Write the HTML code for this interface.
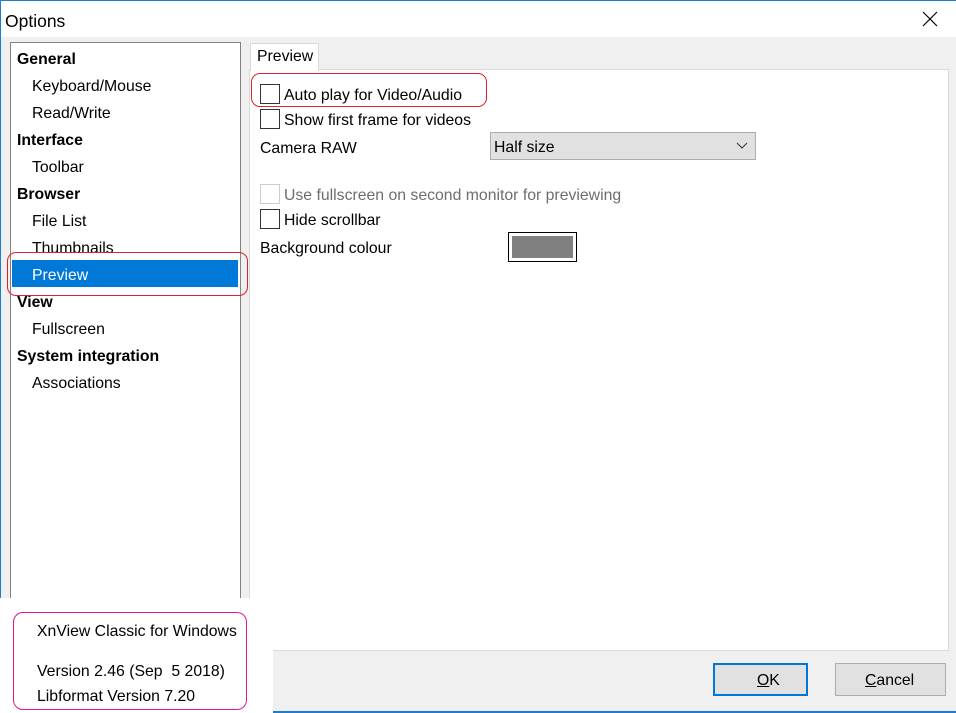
<!DOCTYPE html>
<html><head><style>
*{margin:0;padding:0;box-sizing:border-box}
body{width:956px;height:713px;position:relative;background:#f0f0f0;font-family:"Liberation Sans",Arial,sans-serif;font-size:15.8px;color:#000;overflow:hidden}
.a{position:absolute;white-space:nowrap}
.t{position:absolute;white-space:nowrap;margin-top:1px}
.cb{position:absolute;width:20px;height:20px;border:1px solid #333;background:#fff}
</style></head><body>
<div class="a" style="left:0;top:0;width:956px;height:1px;background:#1a7fd4"></div>
<div class="a" style="left:0;top:0;width:1px;height:713px;background:#1a7fd4"></div>
<div class="a" style="left:1px;top:1px;width:955px;height:36px;background:#fff"></div>
<div class="t" style="left:5px;top:10px;font-size:17.5px">Options</div>
<svg class="a" style="left:922px;top:11px" width="16" height="16"><path d="M1 1L15 15M15 1L1 15" stroke="#000" stroke-width="1.2"/></svg>

<div class="a" style="left:10px;top:42px;width:231px;height:566px;background:#fff;border:1px solid #828282"></div>
<div class="a" style="left:12px;top:260px;width:226px;height:27px;background:#0078d7"></div>
<div class="t" style="left:17px;top:50px;font-weight:bold">General</div>
<div class="t" style="left:32px;top:77px">Keyboard/Mouse</div>
<div class="t" style="left:32px;top:104px">Read/Write</div>
<div class="t" style="left:17px;top:131px;font-weight:bold">Interface</div>
<div class="t" style="left:32px;top:158px">Toolbar</div>
<div class="t" style="left:17px;top:185px;font-weight:bold">Browser</div>
<div class="t" style="left:32px;top:212px">File List</div>
<div class="t" style="left:32px;top:239px">Thumbnails</div>
<div class="t" style="left:32px;top:266px;color:#fff">Preview</div>
<div class="t" style="left:17px;top:293px;font-weight:bold">View</div>
<div class="t" style="left:32px;top:320px">Fullscreen</div>
<div class="t" style="left:17px;top:347px;font-weight:bold">System integration</div>
<div class="t" style="left:32px;top:374px">Associations</div>
<div class="a" style="left:7px;top:252px;width:241px;height:44px;border:1px solid #e0202a;border-radius:9px"></div>

<div class="a" style="left:249px;top:69px;width:700px;height:582px;background:#fff;border:1px solid #d9d9d9"></div>
<div class="a" style="left:250px;top:43px;width:69px;height:28px;background:#fff;border:1px solid #d9d9d9;border-bottom:none"></div>
<div class="t" style="left:257px;top:47px">Preview</div>

<div class="a" style="left:251px;top:73px;width:236px;height:34px;border:1px solid #e0202a;border-radius:9px"></div>
<div class="cb" style="left:260px;top:84px"></div><div class="t" style="left:284px;top:86px">Auto play for Video/Audio</div>
<div class="cb" style="left:260px;top:109px"></div><div class="t" style="left:284px;top:111px">Show first frame for videos</div>
<div class="t" style="left:260px;top:139px">Camera RAW</div>
<div class="a" style="left:490px;top:132px;width:266px;height:28px;background:#e1e1e1;border:1px solid #adadad"></div>
<div class="t" style="left:494px;top:138px">Half size</div>
<svg class="a" style="left:736px;top:142px" width="12" height="8"><path d="M1 1L6 6L11 1" stroke="#333" fill="none"/></svg>
<div class="cb" style="left:260px;top:184px;border-color:#ccc"></div><div class="t" style="left:284px;top:186px;color:#6d6d6d">Use fullscreen on second monitor for previewing</div>
<div class="cb" style="left:260px;top:209px"></div><div class="t" style="left:284px;top:211px">Hide scrollbar</div>
<div class="t" style="left:260px;top:239px">Background colour</div>
<div class="a" style="left:508px;top:232px;width:69px;height:30px;border:1px solid #000;background:#fff"></div>
<div class="a" style="left:512px;top:236px;width:61px;height:22px;background:#808080"></div>

<div class="a" style="left:713px;top:663px;width:95px;height:33px;background:#e1e1e1;border:2px solid #0078d7"></div>
<div class="t" style="left:757px;top:671px"><u>O</u>K</div>
<div class="a" style="left:835px;top:663px;width:111px;height:33px;background:#e1e1e1;border:1px solid #adadad"></div>
<div class="t" style="left:865px;top:671px"><u>C</u>ancel</div>

<div class="a" style="left:0;top:598px;width:273px;height:115px;background:#fff"></div>
<div class="a" style="left:13px;top:612px;width:234px;height:98px;border:1px solid #e8158a;border-radius:10px"></div>
<div class="t" style="left:37px;top:622px">XnView Classic for Windows</div>
<div class="t" style="left:37px;top:662px">Version 2.46 (Sep&nbsp; 5 2018)</div>
<div class="t" style="left:37px;top:687px">Libformat Version 7.20</div>
<div class="a" style="left:273px;top:711px;width:683px;height:2px;background:#1a7fd4"></div>
</body></html>
